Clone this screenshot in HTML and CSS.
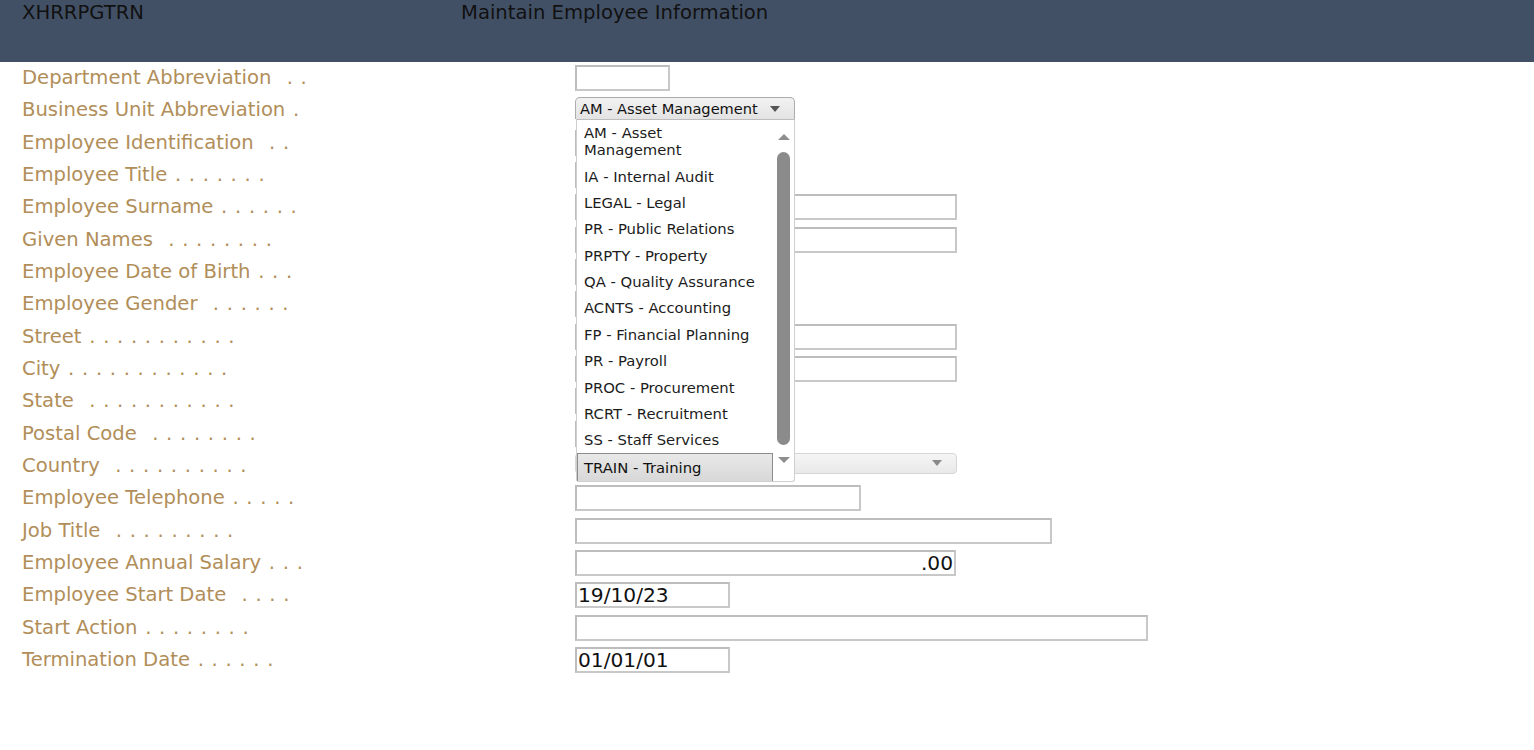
FILE: index.html
```html
<!DOCTYPE html>
<html>
<head>
<meta charset="utf-8">
<link rel="stylesheet" href="styles.css">
</head>
<body>
<header class="topbar">
  <div class="pgm">XHRRPGTRN</div>
  <div class="title">Maintain Employee Information</div>
</header>
<main class="form">
  <div class="lbl">Department Abbreviation<span class="dots">  . .</span></div>
  <div class="fld"><div class="inp w95"></div></div>

  <div class="lbl">Business Unit Abbreviation<span class="dots"> .</span></div>
  <div class="fld sel-cell">
    <div class="sel bu"><span>AM - Asset Management</span><span class="caret"></span></div>
    <div class="dropdown">
      <div class="opts">
        <div class="opt first">AM - Asset<br>Management</div>
        <div class="opt">IA - Internal Audit</div>
        <div class="opt">LEGAL - Legal</div>
        <div class="opt">PR - Public Relations</div>
        <div class="opt">PRPTY - Property</div>
        <div class="opt">QA - Quality Assurance</div>
        <div class="opt">ACNTS - Accounting</div>
        <div class="opt">FP - Financial Planning</div>
        <div class="opt">PR - Payroll</div>
        <div class="opt">PROC - Procurement</div>
        <div class="opt">RCRT - Recruitment</div>
        <div class="opt">SS - Staff Services</div>
        <div class="opt selected">TRAIN - Training</div>
      </div>
      <div class="sbar">
        <span class="arr up"></span>
        <span class="thumb"></span>
        <span class="arr down"></span>
      </div>
    </div>
  </div>

  <div class="lbl">Employee Identification<span class="dots">  . .</span></div>
  <div class="fld"><div class="inp w120"></div></div>

  <div class="lbl">Employee Title<span class="dots"> . . . . . . .</span></div>
  <div class="fld"><div class="inp w80"></div></div>

  <div class="lbl">Employee Surname<span class="dots"> . . . . . .</span></div>
  <div class="fld"><div class="inp w382"></div></div>

  <div class="lbl">Given Names<span class="dots">  . . . . . . . .</span></div>
  <div class="fld"><div class="inp w382"></div></div>

  <div class="lbl">Employee Date of Birth<span class="dots"> . . .</span></div>
  <div class="fld"><div class="inp w155"></div></div>

  <div class="lbl">Employee Gender<span class="dots">  . . . . . .</span></div>
  <div class="fld"><div class="inp w40"></div></div>

  <div class="lbl">Street<span class="dots"> . . . . . . . . . . .</span></div>
  <div class="fld"><div class="inp w382"></div></div>

  <div class="lbl">City<span class="dots"> . . . . . . . . . . . .</span></div>
  <div class="fld"><div class="inp w382"></div></div>

  <div class="lbl">State<span class="dots">  . . . . . . . . . . .</span></div>
  <div class="fld"><div class="inp w60"></div></div>

  <div class="lbl">Postal Code<span class="dots">  . . . . . . . .</span></div>
  <div class="fld"><div class="inp w120"></div></div>

  <div class="lbl">Country<span class="dots">  . . . . . . . . . .</span></div>
  <div class="fld"><div class="sel country"><span></span><span class="caret"></span></div></div>

  <div class="lbl">Employee Telephone<span class="dots"> . . . . .</span></div>
  <div class="fld"><div class="inp w286"></div></div>

  <div class="lbl">Job Title<span class="dots">  . . . . . . . . .</span></div>
  <div class="fld"><div class="inp w477"></div></div>

  <div class="lbl">Employee Annual Salary<span class="dots"> . . .</span></div>
  <div class="fld"><div class="inp w381 num">.00</div></div>

  <div class="lbl">Employee Start Date<span class="dots">  . . . .</span></div>
  <div class="fld"><div class="inp w155">19/10/23</div></div>

  <div class="lbl">Start Action<span class="dots"> . . . . . . . .</span></div>
  <div class="fld"><div class="inp w573"></div></div>

  <div class="lbl">Termination Date<span class="dots"> . . . . . .</span></div>
  <div class="fld"><div class="inp w155">01/01/01</div></div>
</main>
</body>
</html>
```

FILE: styles.css
```css
html, body {
  margin: 0;
  padding: 0;
  background: #ffffff;
}
body {
  font-family: "DejaVu Sans", Verdana, sans-serif;
}
.topbar {
  height: 62px;
  background: #425066;
  display: flex;
  align-items: flex-start;
  font-family: "DejaVu Sans", sans-serif;
  font-size: 19.6px;
  color: #111111;
  box-sizing: border-box;
  padding-top: 1px;
}
.pgm {
  width: 439px;
  padding-left: 22px;
}
.form {
  display: grid;
  grid-template-columns: 553px 1fr;
  grid-auto-rows: 32.33px;
  align-items: center;
  padding-left: 22px;
}
.lbl {
  white-space: pre;
  color: #b18e59;
  font-size: 19.6px;
  line-height: 22px;
}
.dots {
  word-spacing: 1.45px;
}
.fld {
  display: flex;
  align-items: center;
  height: 100%;
}
.inp {
  box-sizing: border-box;
  height: 26px;
  border: 2px solid #bdbdbd;
  border-right-color: #c8c8c8;
  border-bottom-color: #c8c8c8;
  background: #fff;
  font-size: 20.2px;
  line-height: 22px;
  color: #111;
  padding-left: 1px;
}
.num { text-align: right; padding-right: 1px; }
.w40 { width: 40px; }
.w60 { width: 60px; }
.w80 { width: 80px; }
.w95 { width: 95px; }
.w120 { width: 120px; }
.w155 { width: 155px; }
.w286 { width: 286px; }
.w381 { width: 381px; }
.w382 { width: 382px; }
.w477 { width: 477px; }
.w573 { width: 573px; }

.sel-cell {
  position: relative;
  align-items: flex-start;
}
.sel {
  box-sizing: border-box;
  display: flex;
  align-items: center;
  justify-content: space-between;
  border: 1px solid #acacac;
  border-radius: 4px;
  background: linear-gradient(#f2f2f2, #e3e3e3);
  font-size: 14.6px;
  color: #111;
}
.sel.bu {
  width: 220px;
  height: 22px;
  padding: 0 14px 0 4px;
  border-radius: 5px 5px 0 0;
  border-bottom: none;
  margin-top: 3px;
}
.sel.country {
  width: 382px;
  height: 21px;
  padding: 0 14px 0 4px;
  border-color: #d6d6d6;
  background: linear-gradient(#f5f5f5, #e9e9e9);
  align-self: flex-start;
  margin-top: 3px;
}
.caret {
  width: 0;
  height: 0;
  border-left: 5px solid transparent;
  border-right: 5px solid transparent;
  border-top: 6px solid #555;
}
.country .caret { border-top-color: #8a8a8a; }

.dropdown {
  position: absolute;
  left: 1px;
  top: 24.5px;
  width: 219px;
  height: 363px;
  box-sizing: border-box;
  background: #fff;
  border: 1px solid #cfcfcf;
  border-top: 1px solid #bdbdbd;
  border-radius: 0 0 3px 3px;
  display: flex;
  z-index: 5;
}
.opts {
  width: 196px;
}
.opt {
  box-sizing: border-box;
  height: 26.4px;
  padding: 4.5px 0 0 7px;
  font-size: 14.8px;
  line-height: 17px;
  color: #1c1c1c;
  white-space: nowrap;
}
.opt.first { height: 43.2px; }
.opt.selected {
  border: 1px solid #8c8c8c;
  border-bottom: none;
  background: linear-gradient(#e8e8e8, #d8d8d8);
  padding-left: 6px;
  padding-top: 5px;
  height: 28px;
  color: #111;
}
.sbar {
  width: 21px;
  display: flex;
  flex-direction: column;
  align-items: center;
  padding: 14px 0 0 0;
  box-sizing: border-box;
}
.arr {
  width: 0;
  height: 0;
  border-left: 6px solid transparent;
  border-right: 6px solid transparent;
}
.arr.up { border-bottom: 6px solid #8e8e8e; margin-bottom: 12px; }
.arr.down { border-top: 6px solid #8e8e8e; margin-top: 12px; }
.thumb {
  width: 13px;
  height: 293px;
  background: #8b8b8b;
  border-radius: 7px;
}
```
